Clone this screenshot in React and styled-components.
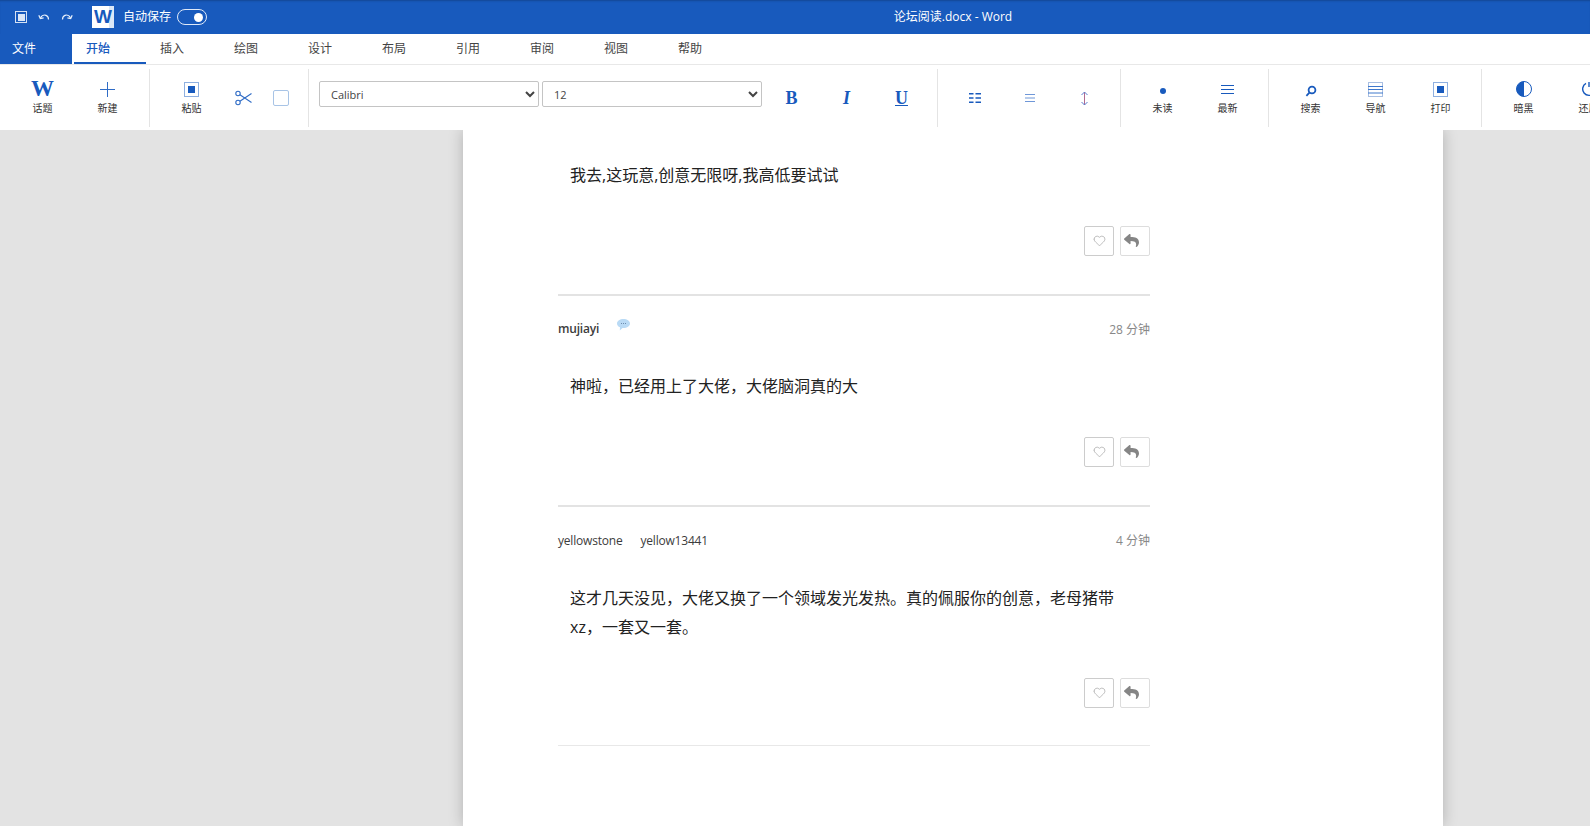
import React from "react";
import styled, { createGlobalStyle } from "styled-components";
import { FaReply } from "react-icons/fa";
import { Heart } from "lucide-react";

const BLUE = "#185abd";
const FONT = `"Open Sans", "Noto Sans CJK SC", sans-serif`;

const Global = createGlobalStyle`
  html, body { margin: 0; padding: 0; height: 100%; overflow: hidden; }
  body { font-family: ${FONT}; background: #e3e3e3; }
  * { box-sizing: border-box; }
`;

const App_ = styled.div`
  width: 1590px;
  height: 826px;
  display: flex;
  flex-direction: column;
  overflow: hidden;
`;

/* title bar */
const TitleBar = styled.header`
  flex: 0 0 34px;
  display: flex;
  align-items: center;
  background: ${BLUE};
  color: #fff;
  box-shadow: inset 0 2px 2px -1px rgba(0, 0, 0, 0.22);
`;
const TitleLeft = styled.div`
  flex: 0 0 316px;
  display: flex;
  align-items: center;
  padding-left: 15px;
`;
const QuickIcon = styled.span`
  display: flex;
  align-items: center;
  justify-content: center;
  width: ${(p) => p.$w || 23}px;
  height: 22px;
`;
const Logo = styled.span`
  width: 22px;
  height: 22px;
  margin-left: ${(p) => p.$ml || 0}px;
  background: linear-gradient(90deg, #fff 75%, #dbe7f7 75%);
  color: ${BLUE};
  font: 700 19px/22px "Liberation Sans", sans-serif;
  text-align: center;
`;
const AutoSave = styled.span`
  margin-left: 9px;
  font-size: 12px;
  line-height: 16px;
`;
const Toggle = styled.span`
  width: 30px;
  height: 16px;
  margin-left: 6px;
  padding-right: 3px;
  border: 1px solid #dfe9f8;
  border-radius: 8px;
  display: flex;
  align-items: center;
  justify-content: flex-end;
  &::after {
    content: "";
    width: 9px;
    height: 9px;
    border-radius: 50%;
    background: #fff;
  }
`;
const DocTitle = styled.div`
  flex: 1;
  text-align: center;
  font-size: 12px;
  line-height: 32px;
`;

/* tabs */
const TabBar = styled.nav`
  flex: 0 0 31px;
  display: flex;
  background: #fff;
  border-bottom: 1px solid #e8e8e8;
`;
const FileTab = styled.div`
  flex: 0 0 72px;
  height: 30px;
  padding-left: 12px;
  margin-right: 2px;
  background: ${BLUE};
  color: #fff;
  font-size: 12px;
  line-height: 30px;
`;
const Tab = styled.div`
  flex: 0 0 ${(p) => (p.$active ? 72 : 74)}px;
  margin-right: ${(p) => (p.$active ? 2 : 0)}px;
  height: 30px;
  padding-left: 12px;
  font-size: 12px;
  line-height: 30px;
  color: ${(p) => (p.$active ? BLUE : "#444")};
  font-weight: ${(p) => (p.$active ? 500 : 400)};
  border-bottom: 2px solid ${(p) => (p.$active ? BLUE : "transparent")};
`;

/* ribbon */
const Ribbon = styled.section`
  flex: 0 0 65px;
  display: flex;
  align-items: stretch;
  padding-top: 4px;
  padding-bottom: 3px;
  background: #fff;
  overflow: hidden;
  position: relative;
  z-index: 1;
`;
const Group = styled.div`
  flex: none;
  display: flex;
  align-items: stretch;
  padding: 0 ${(p) => p.$pr || 8}px 0 ${(p) => p.$pl || 9}px;
  border-right: 1px solid #e4e4e4;
  &:last-child { border-right: 0; }
`;
const ToolButton = styled.div`
  flex: none;
  width: ${(p) => p.$w || 65}px;
  display: flex;
  flex-direction: column;
  align-items: center;
  justify-content: ${(p) => (p.$label ? "flex-start" : "center")};
  color: ${BLUE};
  padding-top: ${(p) => (p.$label ? 10 : 0)}px;
`;
const IconSlot = styled.span`
  height: 20px;
  display: flex;
  align-items: center;
  justify-content: center;
  padding-top: ${(p) => p.$drop || 0}px;
`;
const ToolLabel = styled.span`
  margin-top: 1px;
  font-size: 10px;
  line-height: 16px;
  color: #333;
`;
const SerifGlyph = styled.span`
  font-family: "Liberation Serif", serif;
  font-weight: 700;
  font-size: ${(p) => p.$size || 18}px;
  font-style: ${(p) => (p.$italic ? "italic" : "normal")};
  text-decoration: ${(p) => (p.$under ? "underline" : "none")};
  color: ${BLUE};
  line-height: 20px;
`;
const StopIcon = styled.span`
  width: ${(p) => p.$size || 15}px;
  height: ${(p) => p.$size || 15}px;
  display: flex;
  align-items: center;
  justify-content: center;
  border: 1px solid ${(p) => (p.$light ? "#d5e1f3" : "#8fb0e0")};
  &::after {
    content: "";
    width: 7px;
    height: 7px;
    background: ${(p) => (p.$light ? "#dbe7f8" : BLUE)};
  }
`;
const EmptySquare = styled.span`
  width: 16px;
  height: 16px;
  border: 1px solid #a8c4e6;
  border-radius: 2px;
`;
const FontSelect = styled.select`
  flex: none;
  width: ${(p) => p.$w}px;
  height: 26px;
  margin: 12px ${(p) => p.$mr || 0}px 0 ${(p) => p.$ml || 0}px;
  padding-left: 7px;
  border: 1px solid #c4c4c4;
  border-radius: 2px;
  background: #fff;
  color: #444;
  font-family: "Open Sans", sans-serif;
  font-size: 11px;
  outline: 0;
`;
const Dot = styled.span`
  width: 6px;
  height: 6px;
  border-radius: 50%;
  background: ${BLUE};
`;

/* work area */
const Workspace = styled.main`
  flex: 1;
  min-height: 0;
  padding-left: 463px;
  background: #e3e3e3;
`;
const Page = styled.article`
  width: 980px;
  height: 100%;
  padding: 31px 293px 0 95px;
  background: #fff;
  box-shadow: 0 0 14px rgba(0, 0, 0, 0.22);
`;
const Comment = styled.div`
  padding: ${(p) => (p.$first ? "0" : "23px")} 0 ${(p) => (p.$last ? 37.5 : p.$first ? 38 : 38.5)}px;
  border-bottom: ${(p) => (p.$last ? "1px solid #e8e8e8" : "2px solid #e3e3e3")};
`;
const Meta = styled.div`
  height: 20px;
  margin-bottom: 33.5px;
  display: flex;
  align-items: center;
  font-size: 12px;
  letter-spacing: -0.2px;
  color: #555;
`;
const Name = styled.span`
  font-weight: ${(p) => (p.$strong ? 600 : 500)};
  color: #3c3c3c;
  margin-right: ${(p) => p.$mr || 0}px;
`;
const Time = styled.time`
  margin-left: auto;
  letter-spacing: 0;
  color: #888;
`;
const Body = styled.p`
  margin: 0 0 35px;
  padding: 0 12px;
  font-size: 16px;
  line-height: 29.6px;
  color: #222;
`;
const Actions = styled.div`
  display: flex;
  justify-content: flex-end;
  gap: 6px;
`;
const ActionButton = styled.button`
  width: 30px;
  height: 30px;
  padding: 0 ${(p) => p.$pr || 0}px 0 0;
  display: flex;
  align-items: center;
  justify-content: center;
  background: #fff;
  border: 1px solid ${(p) => (p.$light ? "#ddd" : "#ccc")};
  border-radius: 2px;
  color: #999;
`;

const Undo = ({ flip }) => (
  <svg width="12" height="10" viewBox="0 0 12 10" fill="none" stroke="#e8f0fb" strokeWidth="1.2" style={flip ? { transform: "scaleX(-1)" } : undefined}>
    <path d="M2.5 6C3.5 3.6 6 2.6 8 3.4 9.6 4 10.5 5.4 10.5 7.5" />
    <path d="M0.8 3.2 2.3 6.6 5.6 5.8" />
  </svg>
);
const PlusIcon = () => (
  <svg width="15" height="15" viewBox="0 0 15 15" stroke="#2f6cc6" strokeWidth="1">
    <path d="M7.500 0v15M0 7.500h15" />
  </svg>
);
const ScissorsIcon = () => (
  <svg width="17" height="16" viewBox="0 0 17 16" fill="none" stroke="#2f6cc6" strokeWidth="1.1">
    <circle cx="3" cy="3.500" r="2.200" />
    <circle cx="3" cy="12.500" r="2.200" />
    <path d="M4.900 4.700 16.500 12.500M4.900 11.300 16.500 3.500" />
  </svg>
);
const Grid = () => (
  <svg width="12" height="10" viewBox="0 0 12 10" fill={BLUE}>
    <path d="M0 0h4.500v1.600H0zM6.500 0H12v1.600H6.500zM0 4.200h4.500v1.600H0zM6.500 4.200H12v1.600H6.500zM0 8.400h4.500V10H0zM6.500 8.400H12V10H6.500z" />
  </svg>
);
const Lines = ({ w = 13, h = 9, color = BLUE }) => (
  <svg width={w} height={h} viewBox={`0 0 ${w} ${h}`} stroke={color} strokeWidth="1">
    <path d={`M0 .5h${w}M0 ${h / 2}h${w}M0 ${h - 0.5}h${w}`} />
  </svg>
);
const UpDown = () => (
  <svg width="9" height="15" viewBox="0 0 9 15" fill="none" stroke="#5b7fd0" strokeWidth="1">
    <path d="M4.500 1v13" stroke="#b06a90" />
    <path d="M1.500 4 4.500 1l3 3M1.500 11l3 3 3-3" />
  </svg>
);
const Search = () => (
  <svg width="12" height="12" viewBox="0 0 12 12" fill="none" stroke={BLUE} strokeWidth="1.800">
    <circle cx="7" cy="5" r="3.400" />
    <path d="M4.400 7.600 1.400 10.800" />
  </svg>
);
const NavIcon = () => (
  <svg width="15" height="15" viewBox="0 0 15 15" fill="none">
    <rect x=".5" y=".5" width="14" height="14" stroke="#a9bfe2" />
    <path d="M0 4.500h15M0 7.500h15M0 11h15" stroke="#3f78cc" strokeWidth="1" />
  </svg>
);
const Contrast = () => (
  <svg width="16" height="16" viewBox="0 0 16 16">
    <circle cx="8" cy="8" r="7.500" fill="#fff" stroke={BLUE} />
    <path d="M8 .5a7.500 7.500 0 0 0 0 15z" fill={BLUE} />
  </svg>
);
const Restore = () => (
  <svg width="16" height="16" viewBox="0 0 16 16" fill="none" stroke={BLUE} strokeWidth="1.400">
    <path d="M5 2.400A6.400 6.400 0 1 0 11.500 2.600" />
    <path d="M8 1v5" />
  </svg>
);
const Bubble = () => (
  <svg width="13" height="12" viewBox="0 0 13 12" style={{ marginTop: -7 }}>
    <path d="M6.500 0C10 0 13 1.900 13 4.500S10 9 6.500 9H5.500L2.800 11.500 3 8.300C1.200 7.600 0 6.200 0 4.500 0 1.900 3 0 6.500 0Z" fill="#b9daf5" />
    <path d="M4 4.500h1M6 4.500h1M8 4.500h1" stroke="#6d8db0" />
  </svg>
);

const CommentActions = () => (
  <Actions>
    <ActionButton aria-label="like"><Heart size={13} strokeWidth={1} color="#888" /></ActionButton>
    <ActionButton $light $pr={8} aria-label="reply"><FaReply size={15} color="#858585" /></ActionButton>
  </Actions>
);

const tabs = ["开始", "插入", "绘图", "设计", "布局", "引用", "审阅", "视图", "帮助"];

const Tool = ({ label, children, w, drop }) => (
  <ToolButton $label $w={w}>
    <IconSlot $drop={drop}>{children}</IconSlot>
    <ToolLabel>{label}</ToolLabel>
  </ToolButton>
);

export default function App() {
  return (
    <App_>
      <Global />
      <TitleBar>
        <TitleLeft>
          <StopIcon $light $size={12} />
          <QuickIcon $w={34}><Undo /></QuickIcon>
          <QuickIcon $w={12}><Undo flip /></QuickIcon>
          <Logo $ml={19}>W</Logo>
          <AutoSave>自动保存</AutoSave>
          <Toggle />
        </TitleLeft>
        <DocTitle>论坛阅读.docx - Word</DocTitle>
      </TitleBar>
      <TabBar>
        <FileTab>文件</FileTab>
        {tabs.map((t, i) => (
          <Tab key={t} $active={i === 0}>{t}</Tab>
        ))}
      </TabBar>
      <Ribbon>
        <Group $pl={10} $pr={9}>
          <Tool label="话题"><SerifGlyph $size={23}>W</SerifGlyph></Tool>
          <Tool label="新建"><PlusIcon /></Tool>
        </Group>
        <Group>
          <Tool label="粘贴"><StopIcon /></Tool>
          <ToolButton $w={38}><ScissorsIcon /></ToolButton>
          <ToolButton $w={38}><EmptySquare /></ToolButton>
        </Group>
        <Group $pl={10}>
          <FontSelect $w={220} $mr={3} defaultValue="Calibri"><option>Calibri</option></FontSelect>
          <FontSelect $w={220} $mr={2} defaultValue="12"><option>12</option></FontSelect>
          <ToolButton $w={55}><SerifGlyph>B</SerifGlyph></ToolButton>
          <ToolButton $w={55}><SerifGlyph $italic>I</SerifGlyph></ToolButton>
          <ToolButton $w={55}><SerifGlyph $under>U</SerifGlyph></ToolButton>
        </Group>
        <Group>
          <ToolButton $w={55}><Grid /></ToolButton>
          <ToolButton $w={55}><Lines w={10} h={8} color="#6f97d8" /></ToolButton>
          <ToolButton $w={55}><UpDown /></ToolButton>
        </Group>
        <Group>
          <Tool label="未读" drop={3}><Dot /></Tool>
          <Tool label="最新"><Lines /></Tool>
        </Group>
        <Group>
          <Tool label="搜索" drop={3}><Search /></Tool>
          <Tool label="导航"><NavIcon /></Tool>
          <Tool label="打印"><StopIcon /></Tool>
        </Group>
        <Group>
          <Tool label="暗黑"><Contrast /></Tool>
          <Tool label="还原"><Restore /></Tool>
        </Group>
      </Ribbon>
      <Workspace>
        <Page>
          <Comment $first>
            <Body>我去,这玩意,创意无限呀,我高低要试试</Body>
            <CommentActions />
          </Comment>
          <Comment>
            <Meta>
              <Name $strong $mr={18}>mujiayi</Name>
              <Bubble />
              <Time>28 分钟</Time>
            </Meta>
            <Body>神啦，已经用上了大佬，大佬脑洞真的大</Body>
            <CommentActions />
          </Comment>
          <Comment $last>
            <Meta>
              <Name $mr={18}>yellowstone</Name>
              <Name>yellow13441</Name>
              <Time>4 分钟</Time>
            </Meta>
            <Body>这才几天没见，大佬又换了一个领域发光发热。真的佩服你的创意，老母猪带xz，一套又一套。</Body>
            <CommentActions />
          </Comment>
        </Page>
      </Workspace>
    </App_>
  );
}
